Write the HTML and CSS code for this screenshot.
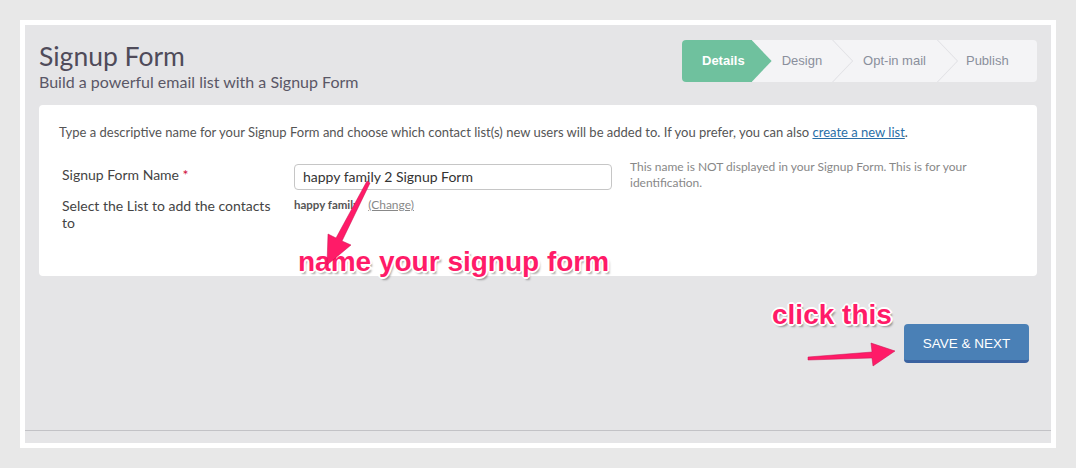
FILE: index.html
```html
<!DOCTYPE html>
<html>
<head>
<meta charset="utf-8">
<link rel="stylesheet" href="styles.css">
</head>
<body>
<div class="frame">
  <div class="content">
    <div class="header">
      <div class="titles">
        <h1 class="title">Signup Form</h1>
        <p class="subtitle">Build a powerful email list with a Signup Form</p>
      </div>
      <div class="steps">
        <div class="step step-active s1">Details</div>
        <div class="step step-sep s2">Design</div>
        <div class="step step-sep s3">Opt-in mail</div>
        <div class="step s4">Publish</div>
      </div>
    </div>

    <div class="card">
      <p class="intro">Type a descriptive name for your Signup Form and choose which contact list(s) new users will be added to. If you prefer, you can also <a class="link" href="#">create a new list</a>.</p>
      <div class="row">
        <div class="label">Signup Form Name <span class="req">*</span></div>
        <div class="field"><div class="input">happy family 2 Signup Form</div></div>
        <div class="help">This name is NOT displayed in your Signup Form. This is for your identification.</div>
      </div>
      <div class="row row2">
        <div class="label">Select the List to add the contacts to</div>
        <div class="listval"><span class="listname">happy family</span><a class="change" href="#">(Change)</a></div>
      </div>
    </div>

    <div class="actions">
      <button class="btn">SAVE &amp; NEXT</button>
    </div>
  </div>
  <div class="footer"></div>

  <div class="note note1">name your signup form</div>
  <div class="note note2">click this</div>
  <svg class="arrow arrow1" width="60" height="90" viewBox="0 0 60 90">
    <path d="M44 4 L47 6 L19 64 L28 68 L4 88 L5 57 L13 61 Z" fill="#ff1b68" stroke="#c8104f" stroke-width="0.5"/>
  </svg>
  <svg class="arrow arrow2" width="100" height="40" viewBox="0 0 100 40">
    <path d="M2 19 L66 14 L65 5 L89 13 L67 28 L66 20 L2 22 Z" fill="#ff1b68" stroke="#c8104f" stroke-width="0.5"/>
  </svg>
</div>
</body>
</html>
```
FILE: styles.css
```css
* { box-sizing: border-box; }
html, body { margin: 0; }
body {
  background: #e8e8e8;
  padding: 20px;
  font-family: Lato, "Open Sans", sans-serif;
  color: #555;
}
.frame {
  position: relative;
  width: 1036px;
  height: 428px;
  border: 5px solid #fff;
  background: #e5e5e7;
  display: flex;
  flex-direction: column;
}
.content {
  padding: 15px 14px 0 14px;
  flex: 1;
}
.header {
  display: flex;
  justify-content: space-between;
  align-items: flex-start;
}
.title {
  margin: 1px 0 0 0;
  font-weight: 400;
  font-size: 26.5px;
  line-height: 30px;
  color: #4f4b5a;
}
.subtitle {
  margin: 1px 0 0 0;
  font-size: 16px;
  line-height: 19px;
  color: #5a5766;
}
.steps {
  display: flex;
  width: 355px;
  height: 42px;
  background: #f4f4f6;
  border-radius: 4px;
  font-family: "Liberation Sans", Arial, sans-serif;
  font-size: 13px;
  line-height: 42px;
  color: #8a8f9c;
}
.step { position: relative; white-space: nowrap; }
.s1 { padding: 0 7px 0 20px; }
.s2 { padding: 0 10px 0 30px; }
.s3 { padding: 0 11px 0 31px; }
.s4 { padding: 0 0 0 29px; flex: 1; }
.step-active {
  background: #6fc19e;
  color: #fff;
  font-weight: 700;
  border-radius: 4px 0 0 4px;
}
.step-active::after {
  content: "";
  position: absolute;
  left: 100%;
  top: 0;
  width: 20px;
  height: 42px;
  background: #6fc19e;
  clip-path: polygon(0 0, 100% 50%, 0 100%);
}
.step-sep::after {
  content: "";
  position: absolute;
  left: 100%;
  top: 0;
  width: 22px;
  height: 42px;
  background: #dfdfe3;
  clip-path: polygon(0 0, 1px 0, 21px 50%, 1px 100%, 0 100%, 20px 50%);
}
.card {
  margin-top: 14px;
  background: #fff;
  border-radius: 4px;
  height: 171px;
  padding: 19px 20px 0 20px;
}
.intro {
  margin: 0;
  font-size: 13px;
  line-height: 16px;
  color: #555;
}
.link { color: #2a6fa8; }
.row {
  display: flex;
  align-items: flex-start;
  margin-top: 24px;
}
.row2 { margin-top: 4px; }
.label {
  width: 235px;
  padding-left: 3px;
  padding-top: 2px;
  font-size: 14px;
  line-height: 17px;
  color: #444;
}
.row2 .label { padding-top: 2px; width: 235px; padding-right: 18px; }
.req { color: #d0103a; }
.input {
  width: 318px;
  height: 26px;
  border: 1px solid #c6c6c6;
  border-radius: 4px;
  padding: 0 8px;
  font-size: 14px;
  line-height: 24px;
  color: #333;
}
.help {
  width: 360px;
  margin-left: 18px;
  margin-top: -5px;
  font-size: 12px;
  line-height: 16px;
  color: #888;
}
.listval {
  font-size: 12px;
  line-height: 16px;
  padding-top: 2px;
}
.listname { color: #555; font-weight: 700; font-size: 11.5px; }
.change { color: #888; margin-left: 9px; }
.actions {
  display: flex;
  justify-content: flex-end;
  padding-right: 8px;
  margin-top: 48px;
}
.btn {
  width: 125px;
  height: 39px;
  border: 0;
  border-bottom: 3px solid #3a62a0;
  border-radius: 4px;
  background: #4a80b6;
  color: #fff;
  font-family: "Liberation Sans", Arial, sans-serif;
  font-size: 13.5px;
  padding: 0;
  padding-top: 3px;
}
.footer {
  height: 13px;
  border-top: 1px solid #c2c2c6;
}
.note {
  position: absolute;
  font-family: "Liberation Sans", Arial, sans-serif;
  font-weight: 700;
  font-size: 28px;
  line-height: 30px;
  color: #ff1b68;
  white-space: nowrap;
  text-shadow:
    -1px -1px 0 #fff, 1px -1px 0 #fff, -1px 1px 0 #fff, 1px 1px 0 #fff,
    0 -2px 0 #fff, 0 2px 0 #fff, -2px 0 0 #fff, 2px 0 0 #fff,
    2px 3px 2px rgba(0,0,0,0.35);
}
.note1 { left: 273px; top: 222px; }
.note2 { left: 747px; top: 275px; }
.arrow { position: absolute; }
.arrow1 { left: 298px; top: 152px; }
.arrow2 { left: 781px; top: 313px; }
```
